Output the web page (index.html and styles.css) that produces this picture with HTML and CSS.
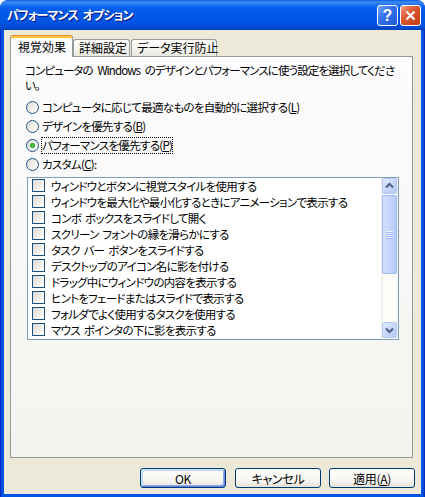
FILE: index.html
```html
<!DOCTYPE html>
<html lang="ja">
<head>
    <meta charset="UTF-8">
    <title>パフォーマンス オプション</title>
    <link rel="stylesheet" href="styles.css">
</head>
<body>
    <div class="window">
        <div class="titlebar">
            <span class="title">パフォーマンス オプション</span>
            <div class="caption-buttons">
                <span class="cap-btn help">?</span>
                <span class="cap-btn close">
                    <svg width="11" height="11" viewBox="0 0 11 11"><path d="M1.5 1.5 L9.5 9.5 M9.5 1.5 L1.5 9.5" stroke="#fff" stroke-width="2.2" fill="none"/></svg>
                </span>
            </div>
        </div>
        <div class="client">
            <div class="tabs">
                <div class="tab active">視覚効果</div>
                <div class="tab tab-detail">詳細設定</div>
                <div class="tab tab-dep">データ実行防止</div>
            </div>
            <div class="panel">
                <p class="desc">コンピュータの Windows のデザインとパフォーマンスに使う設定を選択してくださ<br>い。</p>
                <div class="radios">
                    <div class="radio"><span class="radio-box"></span><span class="radio-text">コンピュータに応じて最適なものを自動的に選択する(<u>L</u>)</span></div>
                    <div class="radio"><span class="radio-box"></span><span class="radio-text">デザインを優先する(<u>B</u>)</span></div>
                    <div class="radio"><span class="radio-box checked"></span><span class="radio-text focused">パフォーマンスを優先する(<u>P</u>)</span></div>
                    <div class="radio"><span class="radio-box"></span><span class="radio-text">カスタム(<u>C</u>):</span></div>
                </div>
                <div class="listbox">
                    <ul class="items">
                        <li><span class="check"></span>ウィンドウとボタンに視覚スタイルを使用する</li>
                        <li><span class="check"></span>ウィンドウを最大化や最小化するときにアニメーションで表示する</li>
                        <li><span class="check"></span>コンボ ボックスをスライドして開く</li>
                        <li><span class="check"></span>スクリーン フォントの縁を滑らかにする</li>
                        <li><span class="check"></span>タスク バー ボタンをスライドする</li>
                        <li><span class="check"></span>デスクトップのアイコン名に影を付ける</li>
                        <li><span class="check"></span>ドラッグ中にウィンドウの内容を表示する</li>
                        <li><span class="check"></span>ヒントをフェードまたはスライドで表示する</li>
                        <li><span class="check"></span>フォルダでよく使用するタスクを使用する</li>
                        <li><span class="check"></span>マウス ポインタの下に影を表示する</li>
                    </ul>
                    <div class="scrollbar">
                        <div class="scroll-btn">
                            <svg width="13" height="14" viewBox="0 0 13 14"><path d="M3 8.5 L6.5 5 L10 8.5" stroke="#4D6185" stroke-width="2" fill="none"/></svg>
                        </div>
                        <div class="thumb"><span class="grip"></span></div>
                        <div class="track"></div>
                        <div class="scroll-btn">
                            <svg width="13" height="14" viewBox="0 0 13 14"><path d="M3 5.5 L6.5 9 L10 5.5" stroke="#4D6185" stroke-width="2" fill="none"/></svg>
                        </div>
                    </div>
                </div>
            </div>
            <div class="buttons">
                <button class="btn default">OK</button>
                <button class="btn">キャンセル</button>
                <button class="btn">適用(<u>A</u>)</button>
            </div>
        </div>
    </div>
</body>
</html>
```

FILE: styles.css
```css
* {
    box-sizing: border-box;
}

body {
    margin: 0;
    background: #ffffff;
    font-family: "Noto Sans CJK JP", sans-serif;
    font-size: 11.5px;
    letter-spacing: -0.7px;
    word-spacing: 2px;
    font-feature-settings: "palt";
    color: #000;
}

.window {
    width: 425px;
    height: 497px;
    display: flex;
    flex-direction: column;
    background: linear-gradient(to right, #0019A8 0, #0843DD 1px, #0055E5 3px, #0055E5 422px, #0843DD 424px, #0019A8 425px);
    border-radius: 8px 8px 0 0;
    overflow: hidden;
}

/* title bar */
.titlebar {
    height: 30px;
    flex: none;
    display: flex;
    align-items: center;
    justify-content: space-between;
    padding: 0 4px 0 7px;
    border-radius: 8px 8px 0 0;
    background: linear-gradient(to bottom, #0A5BE6 0, #3F8CF3 2px, #2A7BF2 4px, #0762EE 7px, #0058E6 12px, #0055E5 20px, #0150DD 25px, #0046CA 29px, #003CB3 30px);
}

.title {
    color: #ffffff;
    font-size: 12px;
    font-weight: bold;
    letter-spacing: -0.9px;
    word-spacing: 3px;
    text-shadow: 1px 1px #0A1883;
    line-height: 16px;
}

.caption-buttons {
    display: flex;
    gap: 2px;
    margin-top: 1px;
}

.cap-btn {
    width: 21px;
    height: 21px;
    border: 1px solid #ffffff;
    border-radius: 3px;
    display: flex;
    align-items: center;
    justify-content: center;
}

.help {
    background: linear-gradient(135deg, #78A5FB 0%, #3572EA 40%, #1F58D8 100%);
    color: #ffffff;
    font-family: "Liberation Sans", sans-serif;
    font-weight: bold;
    font-size: 16px;
    letter-spacing: 0;
    line-height: 19px;
}

.close {
    background: linear-gradient(135deg, #F0A183 0%, #DD5A31 40%, #C23A14 100%);
}

/* client area */
.client {
    flex: 1;
    margin: 0 4px 3px;
    background: #ECE9D8;
    display: flex;
    flex-direction: column;
    padding: 0 6px;
}

.tabs {
    display: flex;
    align-items: flex-end;
    height: 22px;
    margin-top: 5px;
    margin-bottom: -1px;
    position: relative;
    z-index: 1;
}

.tab {
    height: 17px;
    margin-bottom: 1px;
    padding-left: 5px;
    border: 1px solid #919B9C;
    border-bottom: none;
    border-radius: 3px 3px 0 0;
    background: linear-gradient(#FFFFFF, #F3F2ED 60%, #E9E8E2);
    font-size: 12px;
    letter-spacing: 0;
    line-height: 16px;
    white-space: nowrap;
}

.tab.active {
    width: 63px;
    height: 22px;
    margin-bottom: 0;
    padding: 2px 0 0 7px;
    border-top-color: #E68B2C;
    background: #FCFCFE;
    box-shadow: inset 0 2px 0 #FFC73C;
    line-height: 18px;
}

.tab-detail {
    width: 57px;
}

.tab-dep {
    width: 86px;
    margin-left: 1px;
}

.panel {
    flex: 1;
    margin-right: 2px;
    border: 1px solid #919B9C;
    background: linear-gradient(#FCFCFE, #F4F3EE);
    padding: 6px 13px 0 14px;
}

.desc {
    margin: 0;
    line-height: 15px;
    letter-spacing: -0.9px;
    word-spacing: 3px;
    white-space: nowrap;
}

.radios {
    margin-top: 5px;
}

.radio {
    display: flex;
    align-items: center;
    height: 19px;
    gap: 2px;
    padding-left: 1px;
}

.radio-box {
    width: 13px;
    height: 13px;
    border: 1px solid #1C5180;
    border-radius: 50%;
    background: linear-gradient(135deg, #DCDCD7 0%, #F1F0EA 55%, #FFFFFF 100%);
    flex: none;
}

.radio-box.checked {
    background: radial-gradient(circle, #63D65F 0, #21A121 2px, transparent 3px), linear-gradient(135deg, #DCDCD7 0%, #F1F0EA 55%, #FFFFFF 100%);
}

.radio-text {
    border: 1px solid transparent;
    line-height: 15px;
    white-space: nowrap;
}

.radio-text.focused {
    border: 1px dotted #000;
}

/* list with checkboxes */
.listbox {
    display: flex;
    height: 163px;
    margin: 3px 0 0 2px;
    border: 1px solid #7F9DB9;
    background: #ffffff;
}

.items {
    flex: 1;
    list-style: none;
    margin: 0;
    padding: 0 0 0 4px;
}

.items li {
    display: flex;
    align-items: flex-start;
    gap: 6px;
    height: 16px;
    line-height: 16px;
    white-space: pre;
}

.check {
    width: 13px;
    height: 13px;
    margin-top: 1px;
    border: 1px solid #1C5180;
    background: linear-gradient(135deg, #DCDCD7 0%, #F1F0EA 55%, #FFFFFF 100%);
    flex: none;
}

.scrollbar {
    width: 17px;
    display: flex;
    flex-direction: column;
    padding: 0 1px 1px;
    background: linear-gradient(to right, #EEEDE5, #FDFDFA 3px, #FDFDFA 14px, #F3F1EC);
}

.scroll-btn {
    height: 16px;
    border: 1px solid #B4C8F6;
    border-radius: 2px;
    background: linear-gradient(135deg, #E4ECFE 0%, #C7D7FB 50%, #B5CBF8 100%);
    display: flex;
    align-items: center;
    justify-content: center;
}

.thumb {
    height: 79px;
    margin-top: 1px;
    border: 1px solid #9EB8F3;
    border-radius: 2px;
    background: linear-gradient(to right, #D4E1FD 0%, #C6D6FC 50%, #B7CBF8 100%);
    display: flex;
    align-items: center;
    justify-content: center;
}

.grip {
    width: 7px;
    height: 8px;
    background: repeating-linear-gradient(to bottom, #EEF4FE 0, #EEF4FE 1px, #9DB8F3 1px, #9DB8F3 2px);
}

.track {
    flex: 1;
}

/* bottom buttons */
.buttons {
    display: flex;
    justify-content: flex-end;
    gap: 8px;
    margin: 10px 0 6px;
}

.btn {
    width: 86px;
    height: 20px;
    padding: 0;
    border: 1px solid #003C74;
    border-radius: 3px;
    background: linear-gradient(#FFFFFF, #F5F4EF 70%, #E3E0D6);
    font-family: "Noto Sans CJK JP", sans-serif;
    font-size: 12px;
    letter-spacing: -0.3px;
    font-feature-settings: "palt";
    line-height: 17px;
    color: #000;
}

.btn.default {
    margin-right: 1px;
    box-shadow: inset 1px 1px #CEE7FF, inset -1px -1px #6982EE, inset 2px 2px #BCD4F6, inset -2px -2px #89ADE4;
}
```
